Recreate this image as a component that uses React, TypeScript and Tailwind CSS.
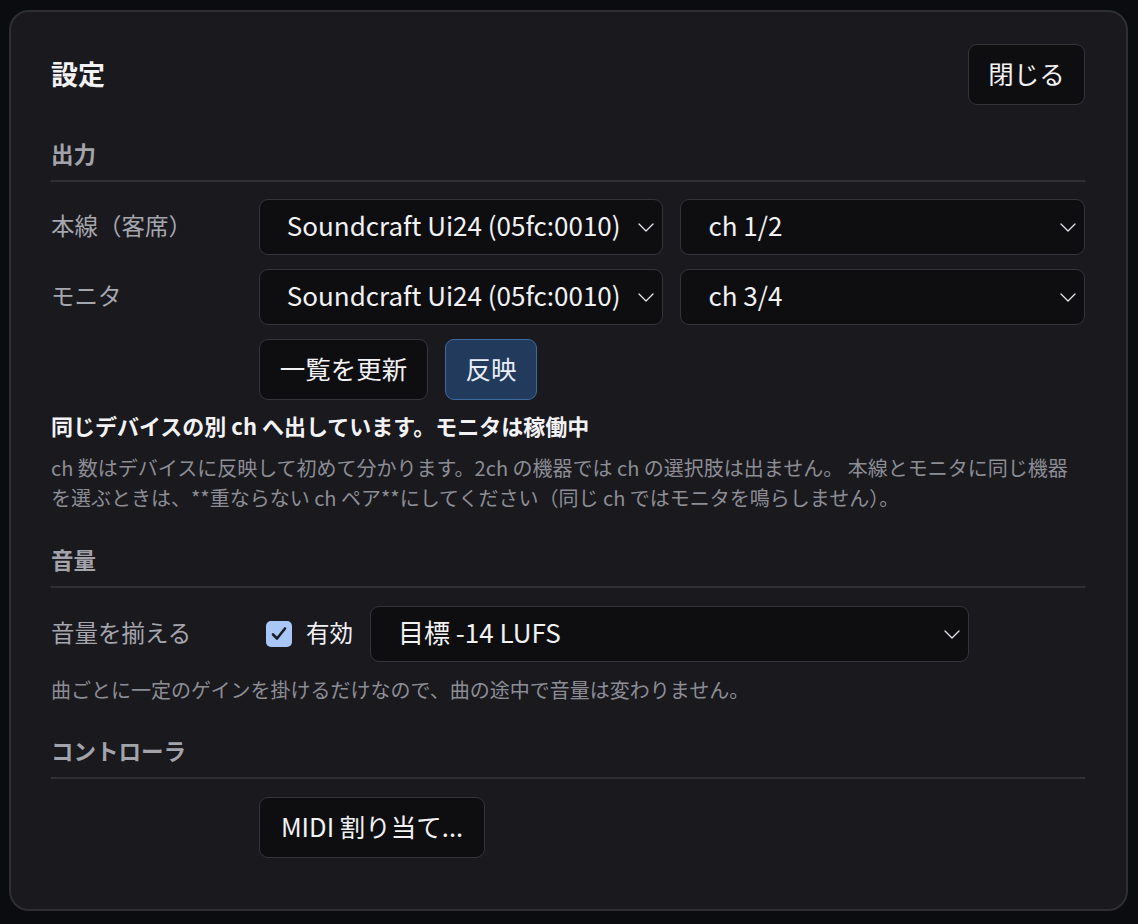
import React from 'react';

const Chevron: React.FC = () => (
  <svg width="16" height="9" viewBox="0 0 16 9" fill="none" className="shrink-0">
    <path d="M1 1 L8 8 L15 1" stroke="#e6e6ea" strokeWidth="1.3" strokeLinecap="round" strokeLinejoin="round" />
  </svg>
);

const Select: React.FC<{ value: string; className?: string }> = ({ value, className = '' }) => (
  <div
    className={`h-[56px] flex items-center rounded-[9px] border border-[#34343b] bg-[#0e0e11] pl-[27px] pr-[8px] ${className}`}
  >
    <span className="flex-1 whitespace-nowrap text-[26px] text-[#f2f2f4] overflow-hidden pb-[5px]">{value}</span>
    <Chevron />
  </div>
);

const Button: React.FC<{ children: React.ReactNode; primary?: boolean; className?: string }> = ({ children, primary, className = '' }) => (
  <div
    className={`h-[61px] flex items-center justify-center whitespace-nowrap rounded-[9px] border pb-[3px] text-[25.5px] ${
      primary ? 'bg-[#223a5c] border-[#3d6aa0] text-[#e8eef8]' : 'bg-[#0e0e11] border-[#34343b] text-[#f2f2f4]'
    } ${className}`}
  >
    {children}
  </div>
);

const SectionHeader: React.FC<{ title: string; className?: string }> = ({ title, className = '' }) => (
  <div className={`border-b-2 border-[#2f2f35] pb-[12px] ${className}`}>
    <div className="text-[22.5px] leading-[30px] font-bold text-[#a3a3ab]">{title}</div>
  </div>
);

export default function App() {
  return (
    <div
      className="w-[1138px] h-[924px] bg-[#0b0c0f] pt-[10px] pl-[9px]"
      style={{ fontFamily: '"Noto Sans CJK JP", "Noto Sans", sans-serif' }}
    >
      <div className="w-[1119px] h-[901px] rounded-[20px] border-2 border-[#2e2e34] bg-[#19191e] pt-[32px] pl-[40px] pr-[41px]">
        <div className="flex items-center justify-between">
          <h1 className="text-[27px] font-bold text-[#f2f2f4]">設定</h1>
          <Button className="w-[117px]">閉じる</Button>
        </div>

        <SectionHeader title="出力" className="mt-[33px]" />

        <div className="mt-[17px] flex flex-col gap-[14px]">
          <div className="flex items-center">
            <div className="w-[208px] text-[23.5px] text-[#a6a6ae] pb-[2px]">本線（客席）</div>
            <Select value="Soundcraft Ui24 (05fc:0010)" className="w-[405px]" />
            <Select value="ch 1/2" className="w-[405px] ml-[17px]" />
          </div>
          <div className="flex items-center">
            <div className="w-[208px] text-[23.5px] text-[#a6a6ae] pb-[2px]">モニタ</div>
            <Select value="Soundcraft Ui24 (05fc:0010)" className="w-[405px]" />
            <Select value="ch 3/4" className="w-[405px] ml-[17px]" />
          </div>
          <div className="flex items-center pl-[208px] gap-[17px]">
            <Button className="w-[169px]">一覧を更新</Button>
            <Button primary className="w-[92px]">反映</Button>
          </div>
        </div>

        <div className="mt-[10px] text-[22px] leading-[30px] font-bold text-[#f2f2f4]">
          同じデバイスの別 ch へ出しています。モニタは稼働中
        </div>
        <p className="mt-[13px] text-[20px] leading-[30px] text-[#8d8d95]">
          ch 数はデバイスに反映して初めて分かります。2ch の機器では ch の選択肢は出ません。 本線とモニタに同じ機器
          <br />
          を選ぶときは、**重ならない ch ペア**にしてください（同じ ch ではモニタを鳴らしません）。
        </p>

        <SectionHeader title="音量" className="mt-[31px]" />

        <div className="mt-[18px] flex items-center">
          <div className="w-[208px] text-[23.5px] text-[#a6a6ae] pb-[3px]">音量を揃える</div>
          <div className="flex items-center ml-[7px]">
            <div className="w-[26px] h-[26px] rounded-[5px] bg-[#a8c7f7] flex items-center justify-center">
              <svg width="18" height="16" viewBox="0 0 18 16" fill="none">
                <path d="M3 8.5 L7 12.5 L15 2.5" stroke="#1a1d24" strokeWidth="2.6" strokeLinecap="round" strokeLinejoin="round" />
              </svg>
            </div>
            <span className="ml-[14px] text-[23.5px] text-[#f2f2f4] pb-[3px]">有効</span>
          </div>
          <Select value="目標 -14 LUFS" className="w-[599px] ml-[17px]" />
        </div>
        <p className="mt-[13px] text-[20px] leading-[30px] text-[#8d8d95]">
          曲ごとに一定のゲインを掛けるだけなので、曲の途中で音量は変わりません。
        </p>

        <SectionHeader title="コントローラ" className="mt-[30px]" />

        <div className="mt-[18px] pl-[208px] flex">
          <Button className="w-[226px]">MIDI 割り当て...</Button>
        </div>
      </div>
    </div>
  );
}
